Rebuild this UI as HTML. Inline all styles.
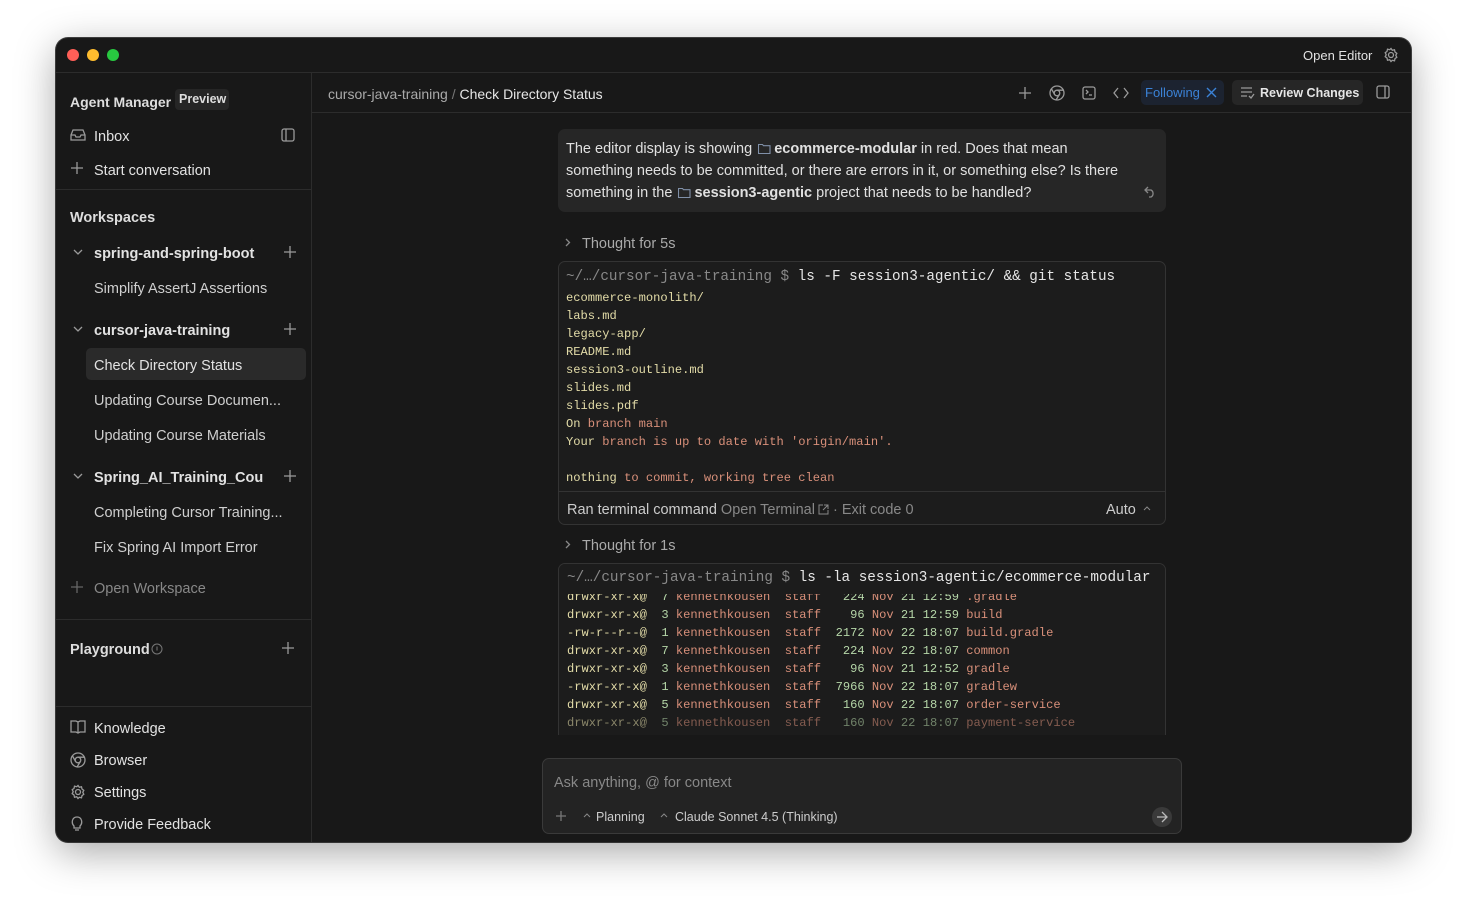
<!DOCTYPE html>
<html><head><meta charset="utf-8"><style>
*{box-sizing:border-box;margin:0;padding:0}
body{width:1467px;height:917px;background:#fff;font-family:"Liberation Sans",sans-serif;position:relative;overflow:hidden}
.win{position:absolute;left:56px;top:38px;width:1355px;height:804px;background:#181818;border-radius:12px;overflow:hidden;box-shadow:0 10px 40px rgba(0,0,0,.35),0 0 0 1px #444}
.abs{position:absolute}
.t{color:#e2e2e2;font-size:14.5px;white-space:nowrap;margin-top:1px}
.dot{position:absolute;top:11px;width:12px;height:12px;border-radius:50%}
.hl{position:absolute;height:1px;background:#2c2c2c}
svg{position:absolute;fill:none;stroke:#9a9a9a;stroke-width:1.3}
.fi{position:relative;display:inline-block;width:13px;height:11px;vertical-align:-1px;margin:0 3px 0 2px}
.fi svg{left:0;top:0;stroke:#8090a8;stroke-width:1.1}
.mono{font-family:"Liberation Mono",monospace;font-size:12.1px;white-space:pre;line-height:18px}
.y{color:#e3dca8}.o{color:#d9907a}.g{color:#b5d6a8}
</style></head><body>
<div class="win">
<div class="dot" style="left:11px;background:#fe5f57"></div>
<div class="dot" style="left:31px;background:#febc2e"></div>
<div class="dot" style="left:51px;background:#28c840"></div>
<div class="t abs" style="left:1247px;top:9px;font-size:13px">Open Editor</div>
<svg style="left:1327px;top:9px" width="16" height="16" viewBox="0 0 16 16"><circle cx="8" cy="8" r="2.5"/><path d="M8 1.5l1.3 1.8 2.2-.5.5 2.2 1.8 1.3-1 2 1 2-1.8 1.3-.5 2.2-2.2-.5L8 14.5l-1.3-1.8-2.2.5-.5-2.2L2.2 9.7l1-2-1-2 1.8-1.3.5-2.2 2.2.5z"/></svg>
<div class="hl" style="left:0;top:34px;width:1355px"></div>
<div class="abs" style="left:255px;top:34px;width:1px;height:770px;background:#2c2c2c"></div>

<!-- sidebar -->
<div class="t abs" style="left:14px;top:55px;font-weight:bold;color:#ddd;font-size:14px">Agent Manager</div>
<div class="abs" style="left:119px;top:51px;width:54px;height:21px;background:#262626;border-radius:4px;color:#ddd;font-size:12.5px;font-weight:bold;padding:3px 4px;white-space:nowrap">Preview</div>
<svg style="left:14px;top:90px" width="16" height="14" viewBox="0 0 16 14"><path d="M1 7l2-5h10l2 5v5H1zM1 7h4l1 2h4l1-2h4"/></svg>
<div class="t abs" style="left:38px;top:90px">Inbox</div>
<svg style="left:225px;top:90px" width="14" height="14" viewBox="0 0 14 14"><rect x="1" y="1" width="12" height="12" rx="2"/><path d="M5 1v12"/></svg>
<svg style="left:15px;top:124px" width="12" height="12" viewBox="0 0 12 12"><path d="M6 0v12M0 6h12"/></svg>
<div class="t abs" style="left:38px;top:124px">Start conversation</div>
<div class="hl" style="left:0;top:151px;width:255px"></div>
<div class="t abs" style="left:14px;top:171px;font-weight:bold;color:#ddd">Workspaces</div>
<svg style="left:17px;top:211px" width="10" height="6" viewBox="0 0 10 6"><path d="M1 1l4 4 4-4"/></svg>
<div class="t abs" style="left:38px;top:207px;font-weight:bold">spring-and-spring-boot</div>
<svg style="left:228px;top:208px" width="12" height="12" viewBox="0 0 12 12"><path d="M6 0v12M0 6h12"/></svg>
<div class="t abs" style="left:38px;top:242px;color:#cfcfcf">Simplify AssertJ Assertions</div>
<svg style="left:17px;top:288px" width="10" height="6" viewBox="0 0 10 6"><path d="M1 1l4 4 4-4"/></svg>
<div class="t abs" style="left:38px;top:284px;font-weight:bold">cursor-java-training</div>
<svg style="left:228px;top:285px" width="12" height="12" viewBox="0 0 12 12"><path d="M6 0v12M0 6h12"/></svg>
<div class="abs" style="left:30px;top:310px;width:220px;height:32px;background:#2a2a2a;border-radius:5px"></div>
<div class="t abs" style="left:38px;top:319px">Check Directory Status</div>
<div class="t abs" style="left:38px;top:354px;color:#cfcfcf">Updating Course Documen...</div>
<div class="t abs" style="left:38px;top:389px;color:#cfcfcf">Updating Course Materials</div>
<svg style="left:17px;top:435px" width="10" height="6" viewBox="0 0 10 6"><path d="M1 1l4 4 4-4"/></svg>
<div class="t abs" style="left:38px;top:431px;font-weight:bold">Spring_AI_Training_Cou</div>
<svg style="left:228px;top:432px" width="12" height="12" viewBox="0 0 12 12"><path d="M6 0v12M0 6h12"/></svg>
<div class="t abs" style="left:38px;top:466px;color:#cfcfcf">Completing Cursor Training...</div>
<div class="t abs" style="left:38px;top:501px;color:#cfcfcf">Fix Spring AI Import Error</div>
<svg style="left:15px;top:543px;stroke:#666" width="12" height="12" viewBox="0 0 12 12"><path d="M6 0v12M0 6h12"/></svg>
<div class="t abs" style="left:38px;top:542px;color:#888">Open Workspace</div>
<div class="hl" style="left:0;top:581px;width:255px"></div>
<div class="t abs" style="left:14px;top:603px;font-weight:bold;color:#ddd">Playground</div>
<svg style="left:95px;top:605px;stroke:#777;stroke-width:1" width="12" height="12" viewBox="0 0 12 12"><circle cx="6" cy="6" r="5"/><path d="M6 3.5v4"/></svg>
<svg style="left:226px;top:604px" width="12" height="12" viewBox="0 0 12 12"><path d="M6 0v12M0 6h12"/></svg>
<div class="hl" style="left:0;top:668px;width:255px"></div>
<svg style="left:14px;top:682px" width="16" height="14" viewBox="0 0 16 14"><path d="M1 1h5l2 1 2-1h5v11h-5l-2 1-2-1H1zM8 2v11"/></svg>
<div class="t abs" style="left:38px;top:682px">Knowledge</div>
<svg style="left:14px;top:714px" width="16" height="16" viewBox="0 0 16 16"><circle cx="8" cy="8" r="7"/><circle cx="8" cy="8" r="2.8"/><path d="M8 5.2h6M5.6 9.5L2.5 4M10.4 9.5L7 15"/></svg>
<div class="t abs" style="left:38px;top:714px">Browser</div>
<svg style="left:14px;top:746px" width="16" height="16" viewBox="0 0 16 16"><circle cx="8" cy="8" r="2.5"/><path d="M8 1.5l1.3 1.8 2.2-.5.5 2.2 1.8 1.3-1 2 1 2-1.8 1.3-.5 2.2-2.2-.5L8 14.5l-1.3-1.8-2.2.5-.5-2.2L2.2 9.7l1-2-1-2 1.8-1.3.5-2.2 2.2.5z"/></svg>
<div class="t abs" style="left:38px;top:746px">Settings</div>
<svg style="left:15px;top:778px" width="12" height="16" viewBox="0 0 12 16"><path d="M3 10c-3-3-2-9 3-9s6 6 3 9v2H3zM4 14h4"/></svg>
<div class="t abs" style="left:38px;top:778px">Provide Feedback</div>

<!-- header -->
<div class="t abs" style="left:272px;top:47px;color:#aaa;font-size:14px">cursor-java-training <span style="color:#777">/</span> <span style="color:#e6e6e6">Check Directory Status</span></div>
<svg style="left:963px;top:49px" width="12" height="12" viewBox="0 0 12 12"><path d="M6 0v12M0 6h12"/></svg>
<svg style="left:993px;top:47px" width="16" height="16" viewBox="0 0 16 16"><circle cx="8" cy="8" r="7"/><circle cx="8" cy="8" r="2.8"/><path d="M8 5.2h6M5.6 9.5L2.5 4M10.4 9.5L7 15"/></svg>
<svg style="left:1026px;top:48px" width="14" height="14" viewBox="0 0 14 14"><rect x="1" y="1" width="12" height="12" rx="2"/><path d="M4 4l2 2-2 2M7 9h3"/></svg>
<svg style="left:1057px;top:49px" width="16" height="12" viewBox="0 0 16 12"><path d="M5 1L1 6l4 5M11 1l4 5-4 5"/></svg>
<div class="abs" style="left:1085px;top:42px;width:83px;height:25px;background:#1c2330;border-radius:5px;color:#3b82d6;font-size:13px;padding:5px 4px;white-space:nowrap">Following</div>
<svg style="left:1150px;top:49px;stroke:#3b82d6;stroke-width:1.4" width="11" height="11" viewBox="0 0 11 11"><path d="M1 1l9 9M10 1l-9 9"/></svg>
<div class="abs" style="left:1176px;top:42px;width:131px;height:25px;background:#262626;border-radius:5px;color:#e6e6e6;font-size:12.5px;font-weight:bold;padding:6px 0 0 28px;white-space:nowrap">Review Changes</div>
<svg style="left:1185px;top:49px" width="14" height="12" viewBox="0 0 14 12"><path d="M0 1h11M0 5h11M0 9h6M8 9l2 2 3-4"/></svg>
<svg style="left:1320px;top:47px" width="14" height="14" viewBox="0 0 14 14"><rect x="1" y="1" width="12" height="12" rx="2"/><path d="M9 1v12"/></svg>
<div class="hl" style="left:256px;top:74px;width:1099px"></div>

<!-- user message -->
<div class="abs" style="left:502px;top:91px;width:608px;height:83px;background:#262626;border-radius:7px"></div>
<div class="abs t" style="left:510px;top:99px;line-height:22px;color:#e0e0e0">The editor display is showing <span class="fi"><svg width="13" height="11" viewBox="0 0 13 11"><path d="M.5 1.5h4l1 1.2h6.5v7.8H.5z"/></svg></span><b style="font-weight:600">ecommerce-modular</b> in red. Does that mean<br>something needs to be committed, or there are errors in it, or something else? Is there<br>something in the <span class="fi"><svg width="13" height="11" viewBox="0 0 13 11"><path d="M.5 1.5h4l1 1.2h6.5v7.8H.5z"/></svg></span><b style="font-weight:600">session3-agentic</b> project that needs to be handled?</div>
<svg style="left:1088px;top:148px;stroke:#888" width="12" height="12" viewBox="0 0 12 12"><path d="M4 1L1 4l3 3M1 4h6a4 4 0 010 7H5"/></svg>

<svg style="left:509px;top:200px;stroke:#888" width="6" height="9" viewBox="0 0 6 9"><path d="M1 1l3.5 3.5L1 8"/></svg>
<div class="t abs" style="left:526px;top:197px;color:#aaa">Thought for 5s</div>

<!-- terminal 1 -->
<div class="abs" style="left:502px;top:223px;width:608px;height:264px;border:1px solid #333;border-radius:7px;background:#1c1c1c"></div>
<div class="abs mono" style="left:510px;top:230px;font-size:14.3px;color:#888">~/…/cursor-java-training $ <span style="color:#e6e6e6">ls -F session3-agentic/ &amp;&amp; git status</span></div>
<div class="abs mono y" style="left:510px;top:251px">ecommerce-monolith/
labs.md
legacy-app/
README.md
session3-outline.md
slides.md
slides.pdf
On <span class="o">branch main</span>
Your <span class="o">branch is up to date with 'origin/main'.</span>

nothing <span class="o">to commit, working tree clean</span></div>
<div class="hl" style="left:503px;top:453px;width:606px;background:#333"></div>
<div class="t abs" style="left:511px;top:463px;color:#ccc">Ran terminal command <span style="color:#888">Open Terminal</span></div>
<svg style="left:762px;top:466px;stroke:#888;stroke-width:1" width="11" height="11" viewBox="0 0 11 11"><path d="M5 1H1v9h9V6M6 1h4v4M10 1L5 6"/></svg>
<div class="t abs" style="left:777px;top:463px;color:#888">· Exit code 0</div>
<div class="t abs" style="left:1050px;top:463px;color:#ccc">Auto</div>
<svg style="left:1087px;top:468px;stroke:#888;stroke-width:1" width="8" height="5" viewBox="0 0 8 5"><path d="M1 4l3-3 3 3"/></svg>

<svg style="left:509px;top:502px;stroke:#888" width="6" height="9" viewBox="0 0 6 9"><path d="M1 1l3.5 3.5L1 8"/></svg>
<div class="t abs" style="left:526px;top:499px;color:#aaa">Thought for 1s</div>

<!-- terminal 2 -->
<div class="abs" style="left:502px;top:525px;width:608px;height:200px;border:1px solid #333;border-bottom:none;border-radius:7px 7px 0 0;background:#1c1c1c;overflow:hidden">
<div class="abs mono" style="left:8px;top:24px;line-height:18px"><span class="y">drwxr-xr-x@</span>  <span class="g">7</span> <span class="o">kennethkousen  staff</span>   <span class="g">224</span> <span class="o">Nov</span> <span class="g">21 12:59</span> <span class="o">.gradle</span>
<span class="y">drwxr-xr-x@</span>  <span class="g">3</span> <span class="o">kennethkousen  staff</span>    <span class="g">96</span> <span class="o">Nov</span> <span class="g">21 12:59</span> <span class="o">build</span>
<span class="y">-rw-r--r--@</span>  <span class="g">1</span> <span class="o">kennethkousen  staff</span>  <span class="g">2172</span> <span class="o">Nov</span> <span class="g">22 18:07</span> <span class="o">build.gradle</span>
<span class="y">drwxr-xr-x@</span>  <span class="g">7</span> <span class="o">kennethkousen  staff</span>   <span class="g">224</span> <span class="o">Nov</span> <span class="g">22 18:07</span> <span class="o">common</span>
<span class="y">drwxr-xr-x@</span>  <span class="g">3</span> <span class="o">kennethkousen  staff</span>    <span class="g">96</span> <span class="o">Nov</span> <span class="g">21 12:52</span> <span class="o">gradle</span>
<span class="y">-rwxr-xr-x@</span>  <span class="g">1</span> <span class="o">kennethkousen  staff</span>  <span class="g">7966</span> <span class="o">Nov</span> <span class="g">22 18:07</span> <span class="o">gradlew</span>
<span class="y">drwxr-xr-x@</span>  <span class="g">5</span> <span class="o">kennethkousen  staff</span>   <span class="g">160</span> <span class="o">Nov</span> <span class="g">22 18:07</span> <span class="o">order-service</span>
<span style="opacity:.55"><span class="y">drwxr-xr-x@</span>  <span class="g">5</span> <span class="o">kennethkousen  staff</span>   <span class="g">160</span> <span class="o">Nov</span> <span class="g">22 18:07</span> <span class="o">payment-service</span></span>
<span style="opacity:.25"><span class="y">drwxr-xr-x@</span>  <span class="g">5</span> <span class="o">kennethkousen  staff</span>   <span class="g">160</span> <span class="o">Nov</span> <span class="g">22 18:07</span> <span class="o">product-service</span></span></div>
<div class="abs" style="left:0;top:0;width:608px;height:30px;background:#1c1c1c"></div>
<div class="abs mono" style="left:8px;top:5px;font-size:14.3px;color:#888">~/…/cursor-java-training $ <span style="color:#e6e6e6">ls -la session3-agentic/ecommerce-modular</span></div>
</div>
<div class="abs" style="left:256px;top:697px;width:1099px;height:107px;background:#181818"></div>

<!-- input -->
<div class="abs" style="left:486px;top:720px;width:640px;height:76px;background:#232323;border:1px solid #3a3a3a;border-radius:7px"></div>
<div class="t abs" style="left:498px;top:736px;color:#888">Ask anything, @ for context</div>
<svg style="left:500px;top:773px;stroke:#777" width="10" height="10" viewBox="0 0 10 10"><path d="M5 0v10M0 5h10"/></svg>
<svg style="left:527px;top:775px;stroke:#888;stroke-width:1" width="8" height="5" viewBox="0 0 8 5"><path d="M1 4l3-3 3 3"/></svg>
<div class="t abs" style="left:540px;top:771px;color:#ccc;font-size:12.5px">Planning</div>
<svg style="left:604px;top:775px;stroke:#888;stroke-width:1" width="8" height="5" viewBox="0 0 8 5"><path d="M1 4l3-3 3 3"/></svg>
<div class="t abs" style="left:619px;top:771px;color:#ccc;font-size:12.5px">Claude Sonnet 4.5 (Thinking)</div>
<div class="abs" style="left:1096px;top:769px;width:20px;height:20px;border-radius:50%;background:#3a3a3a"></div>
<svg style="left:1100px;top:773px;stroke:#bbb" width="12" height="12" viewBox="0 0 12 12"><path d="M1 6h10M6 1l5 5-5 5"/></svg>
</div>
</body></html>
